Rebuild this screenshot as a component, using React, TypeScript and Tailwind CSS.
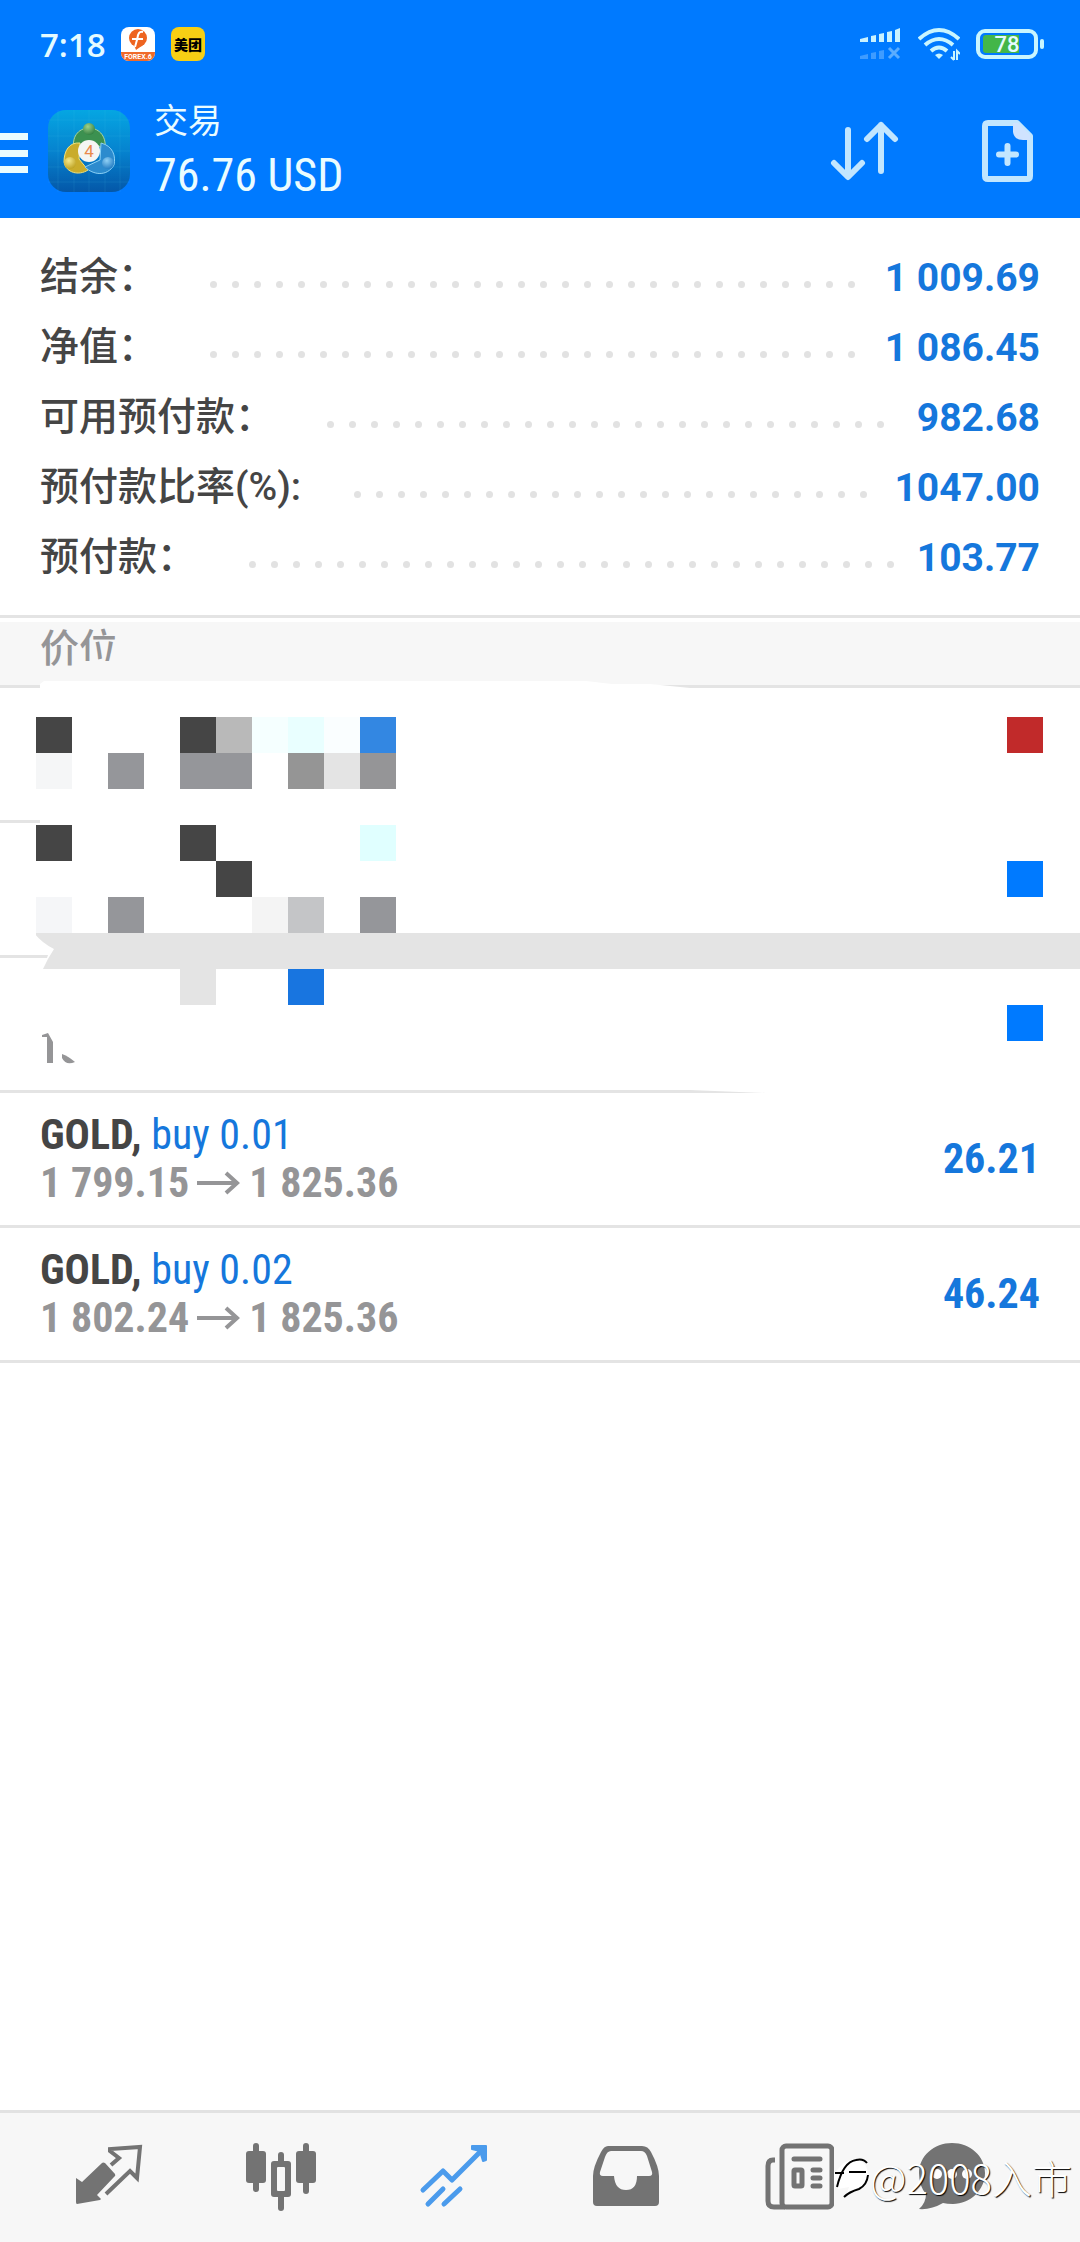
import React from "react";

const accountRows = [
  { label: "结余：", value: "1 009.69" },
  { label: "净值：", value: "1 086.45" },
  { label: "可用预付款：", value: "982.68" },
  { label: "预付款比率(%):", value: "1047.00" },
  { label: "预付款：", value: "103.77" },
];

const positions = [
  { symbol: "GOLD", side: "buy 0.01", open: "1 799.15", current: "1 825.36", profit: "26.21" },
  { symbol: "GOLD", side: "buy 0.02", open: "1 802.24", current: "1 825.36", profit: "46.24" },
];

const condensed = "font-['Roboto_Condensed','Liberation_Sans_Narrow',sans-serif]";

// x, y, width, colour; measured from the top of the first hidden row
const tiles: [number, number, number, string][] = [
  [36, 29, 36, "#454545"],
  [180, 29, 36, "#454545"],
  [216, 29, 36, "#b9b9b9"],
  [252, 29, 36, "#f5ffff"],
  [288, 29, 36, "#e9ffff"],
  [324, 29, 36, "#fafeff"],
  [360, 29, 36, "#3387e2"],
  [36, 65, 36, "#f5f6f7"],
  [108, 65, 36, "#95969a"],
  [180, 65, 72, "#95969a"],
  [288, 65, 36, "#959595"],
  [324, 65, 36, "#e4e4e4"],
  [360, 65, 36, "#959597"],
  [36, 137, 36, "#454545"],
  [180, 137, 36, "#454545"],
  [360, 137, 36, "#e0ffff"],
  [216, 173, 36, "#454545"],
  [36, 209, 36, "#f5f6f8"],
  [108, 209, 36, "#95969a"],
  [252, 209, 36, "#f4f4f4"],
  [288, 209, 36, "#c4c5c7"],
  [360, 209, 36, "#95969a"],
  [180, 281, 36, "#e4e4e4"],
  [288, 281, 36, "#1875e0"],
];

function MetaTraderLogo() {
  return (
    <svg viewBox="0 0 82 82" className="size-[82px]" aria-hidden="true">
      <defs>
        <linearGradient id="tile" x1="0" y1="0" x2="0" y2="1">
          <stop offset="0" stopColor="#05a6e2" />
          <stop offset="0.5" stopColor="#0683cf" />
          <stop offset="1" stopColor="#0457a8" />
        </linearGradient>
        <radialGradient id="green" cx="0.4" cy="0.3" r="0.8">
          <stop offset="0" stopColor="#9fd08a" />
          <stop offset="1" stopColor="#25783a" />
        </radialGradient>
        <radialGradient id="yellow" cx="0.4" cy="0.3" r="0.8">
          <stop offset="0" stopColor="#f5e88a" />
          <stop offset="1" stopColor="#b89a17" />
        </radialGradient>
        <radialGradient id="blue" cx="0.4" cy="0.3" r="0.8">
          <stop offset="0" stopColor="#8fd0f5" />
          <stop offset="1" stopColor="#1873bd" />
        </radialGradient>
      </defs>
      <rect width="82" height="82" rx="18" fill="url(#tile)" />
      <path
        d="M10 0V82M26 0V82M41 0V82M57 0V82M72 0V82M0 10H82M0 26H82M0 41H82M0 57H82M0 72H82"
        stroke="#5cc6ee"
        strokeOpacity="0.12"
      />
      <path d="M26 40C23 24 33 18 41 18S59 24 57 40L48 34H34Z" fill="#3c9150" stroke="#a9d49b" />
      <path d="M32 33C21 32 16 41 16 52C18 63 31 66 40 60L31 49Z" fill="#c9ac2b" stroke="#f2e27a" />
      <path d="M53 33C65 36 68 46 66 55C59 67 45 65 37 57L52 50Z" fill="#2c8bce" stroke="#8bd0f5" />
      <circle cx="41" cy="19" r="6" fill="url(#green)" />
      <circle cx="22" cy="53" r="6" fill="url(#yellow)" />
      <circle cx="60" cy="53" r="6" fill="url(#blue)" />
      <circle cx="41" cy="41" r="11" fill="#f4f6f3" />
      <text x="41" y="47" textAnchor="middle" fontSize="17" fontFamily="Roboto" fill="#e98a4c">
        4
      </text>
    </svg>
  );
}

function StatusBar() {
  return (
    <div className="flex h-[88px] items-center justify-between pl-10 pr-9 text-[#e4fbff]">
      <div className="flex items-center gap-4">
        <span className="w-[65px] whitespace-nowrap font-['Open_Sans',sans-serif] text-[33px] font-semibold leading-none">
          7:18
        </span>
        <svg viewBox="0 0 34 34" className="size-[34px]" aria-hidden="true">
          <rect width="34" height="34" rx="8" fill="#fff" />
          <path d="M0 25H34V26A8 8 0 0 1 26 34H8A8 8 0 0 1 0 26Z" fill="#f06a2a" />
          <circle cx="17" cy="11" r="9" fill="#ee6420" />
          <path d="M13 18L15 23L22 18Z" fill="#ee6420" />
          <path d="M22 5C18 4 17 7 16.500 11L14 20M11 12H22" fill="none" stroke="#fff" strokeWidth="2" />
          <text x="17" y="32" textAnchor="middle" fontSize="7" fontWeight="700" fontFamily="Roboto" fill="#fff">
            FOREX.6
          </text>
        </svg>
        <span className="flex size-[34px] items-center justify-center whitespace-nowrap rounded-lg bg-[#f7cf14] font-['Noto_Sans_CJK_SC',sans-serif] text-[14px] font-black leading-none text-black">
          美团
        </span>
      </div>
      <div className="flex items-center">
        <svg viewBox="0 0 42 32" className="mr-4 h-8 w-[42px]" aria-hidden="true">
          <path d="M0 11L8 9V14H0ZM11 8L16 7V14H11ZM19 6L24 5V14H19ZM27 4L32 3V14H27ZM35 2L40 0V14H35Z" fill="#c9f2ff" />
          <path d="M0 28L8 26V31H0ZM11 25L16 24V31H11ZM19 23L24 22V31H19Z" fill="#3f9cff" />
          <path d="M29 20L39 30M39 20L29 30" stroke="#5badff" strokeWidth="3" />
        </svg>
        <svg viewBox="0 0 42 34" className="mr-4 h-[34px] w-[42px]" fill="none" stroke="#c9f5ff" aria-hidden="true">
          <path d="M1 12Q21 -6 41 12" strokeWidth="4" />
          <path d="M7 18Q21 6 35 18" strokeWidth="4" />
          <path d="M13 24Q21 17 29 24" strokeWidth="4" />
          <path d="M17 28Q21 25 25 28L21 32Z" fill="#c9f5ff" stroke="none" />
          <path d="M36 24V33M33 30L36 33M39 33V24L42 27" strokeWidth="2" />
        </svg>
        <svg viewBox="0 0 68 30" className="h-[30px] w-[68px]" aria-hidden="true">
          <rect x="2" y="2" width="58" height="26" rx="7" fill="none" stroke="#c9f5ff" strokeWidth="4" />
          <path d="M10 6H43V24H10A3 3 0 0 1 7 21V9A3 3 0 0 1 10 6Z" fill="#43b649" />
          <rect x="64" y="10" width="4" height="10" rx="2" fill="#c9f5ff" />
          <text x="31" y="23" textAnchor="middle" fontSize="22" fontWeight="500" fontFamily="Roboto" fill="#e4fbff">
            78
          </text>
        </svg>
      </div>
    </div>
  );
}

function Header() {
  return (
    <header className="flex h-[130px] items-center pb-1">
      <button aria-label="菜单" className="mt-1 flex h-10 w-7 flex-col justify-between">
        <span className="h-[7px] w-full bg-[#eafcff]" />
        <span className="h-[7px] w-full bg-[#eafcff]" />
        <span className="h-[7px] w-full bg-[#eafcff]" />
      </button>
      <div className="ml-5">
        <MetaTraderLogo />
      </div>
      <div className="ml-6 flex grow flex-col text-[#eafcff]">
        <h1 className="font-['Noto_Sans_CJK_SC',sans-serif] text-[34px] leading-[48px]">交易</h1>
        <p className={`${condensed} text-[46px] leading-[64px]`}>76.76 USD</p>
      </div>
      <button aria-label="排序" className="mr-[82px]">
        <svg viewBox="0 0 70 60" className="h-[60px] w-[70px]" fill="none" stroke="#c2e6ff" strokeWidth="6" strokeLinecap="round" strokeLinejoin="round">
          <path d="M18 9V55M4 42L18 56L32 42" />
          <path d="M51 50V4M37 18L51 4L65 18" />
        </svg>
      </button>
      <button aria-label="新订单" className="mr-[46px]">
        <svg viewBox="0 0 52 62" className="h-[62px] w-[52px]">
          <path d="M6 3H35L48 16V56Q48 59 45 59H6Q3 59 3 56V6Q3 3 6 3Z" fill="none" stroke="#c2e6ff" strokeWidth="6" strokeLinejoin="round" />
          <path d="M31 3V12Q32 20 41 20H48V15L36 3Z" fill="#cfe3ff" />
          <path d="M25.500 26V43M17 34.500H34" stroke="#c2e6ff" strokeWidth="6" strokeLinecap="round" />
        </svg>
      </button>
    </header>
  );
}

function Dots() {
  return (
    <div className="ml-[45px] mr-2.5 mt-4 flex h-2 grow basis-0 flex-wrap overflow-hidden" aria-hidden="true">
      {Array.from({ length: 60 }, (_, i) => (
        <span key={i} className="flex h-2 w-[22px] justify-center">
          <span className="size-[7px] rounded-full bg-[#e2e2e2]" />
        </span>
      ))}
    </div>
  );
}

function HiddenPositions() {
  return (
    <div className="relative">
      <div className="h-[135px] border-b-[3px] border-[#e4e4e4]" />
      <div className="h-[135px] border-b-[3px] border-[#e4e4e4]" />
      <div className="h-[135px] border-b-[3px] border-[#e4e4e4]" />
      <div className="absolute bottom-[3px] left-10 right-0 top-0 bg-white" />
      <div className="absolute bottom-0 left-[765px] right-0 h-[3px] bg-white" />
      <svg viewBox="0 0 660 7" className="absolute -top-[7px] left-10 h-[7px] w-[660px]" aria-hidden="true">
        <path d="M0 7V3L4 0H546L572 3H610L650 7Z" fill="#fff" />
      </svg>
      <svg viewBox="0 0 80 3" className="absolute bottom-0 left-[690px] h-[3px] w-20" aria-hidden="true">
        <path d="M0 0H80V3H76Z" fill="#fff" />
      </svg>
      <div className="absolute left-9 right-0 top-[245px] h-9 bg-[#e4e4e4]" />
      <svg viewBox="0 0 400 405" className="absolute left-0 top-0 h-[405px] w-[400px]" aria-hidden="true">
        {tiles.map(([x, y, w, fill]) => (
          <rect key={`${x}-${y}`} x={x} y={y} width={w} height="36" fill={fill} />
        ))}
        <path d="M34 245Q42 255 54 261Q48 270 43 281H34Z" fill="#fff" />
        <path d="M0 267H48L47 270H0Z" fill="#e4e4e4" />
        <path d="M42 347L48 345L53 354V375H47V349H42Z" fill="#959597" />
        <path d="M62 366Q68 368 75 374Q66 378 62 370Z" fill="#959597" />
      </svg>
      <span className="absolute right-[37px] top-[29px] size-9 bg-[#c12a2a]" />
      <span className="absolute right-[37px] top-[173px] size-9 bg-[#007aff]" />
      <span className="absolute right-[37px] top-[317px] size-9 bg-[#007aff]" />
    </div>
  );
}

function BottomNav() {
  const item = "flex w-1/6 items-center justify-center";
  const grey = "#737373";
  return (
    <nav className="relative flex h-[132px] border-t-[3px] border-[#e2e2e2] bg-[#f7f7f7] px-[22px]">
      <button aria-label="行情" className={item}>
        <svg viewBox="0 0 70 70" className="size-[70px]">
          <path d="M3 35L9 39L29 20Q30 19 32 20L42 31Q43 33 41 34L24 52L28 56L27 57L4 61Q3 61 3 59Z" fill={grey} />
          <path d="M38 22L46 15L37 8V6L67 4L64 35L57 28L33 51" fill="none" stroke={grey} strokeWidth="4" />
        </svg>
      </button>
      <button aria-label="图表" className={item}>
        <svg viewBox="0 0 70 70" className="size-[70px]" fill={grey}>
          <rect x="7" y="0" width="6" height="49" rx="3" />
          <rect x="0" y="8" width="20" height="32" rx="3" />
          <rect x="57" y="0" width="6" height="51" rx="3" />
          <rect x="50" y="8" width="20" height="32" rx="3" />
          <rect x="32" y="9" width="6" height="59" rx="3" />
          <rect x="25" y="18" width="20" height="36" rx="3" />
          <rect x="31" y="24" width="8" height="24" rx="1" fill="#f7f7f7" />
        </svg>
      </button>
      <button aria-label="交易" className={item}>
        <svg viewBox="0 0 70 70" className="size-[70px]" fill="none" stroke="#4b9bec" strokeWidth="5" strokeLinecap="round" strokeLinejoin="round">
          <path d="M4 47L24 28L33 37L64 6" />
          <path d="M53 3H67V17L64 18L61 8L53 6Z" fill="#4b9bec" strokeWidth="2" />
          <path d="M9 61L24 46M25 61L41 46" />
        </svg>
      </button>
      <button aria-label="历史" className={item}>
        <svg viewBox="0 0 70 70" className="size-[70px]">
          <path d="M17 3H51Q57 3 60 9Q68 24 68 33V59Q68 63 64 63H6Q2 63 2 59V33Q2 24 10 9Q13 3 17 3Z" fill={grey} />
          <path d="M20 8H50Q54 8 56 13L61 29Q62 33 58 33H46Q46 47 35 47T23 33H12Q8 33 9 29L14 14Q16 8 20 8Z" fill="#f7f7f7" />
        </svg>
      </button>
      <button aria-label="新闻" className={item}>
        <svg viewBox="0 0 70 70" className="size-[70px]" fill="none" stroke={grey} strokeWidth="5">
          <rect x="18" y="3" width="50" height="61" rx="4" />
          <path d="M11 17H9Q4 17 4 23V58Q4 64 10 64H21" />
          <path d="M30 16H56M49 27H56M49 35H56M49 43H56" strokeLinecap="round" />
          <rect x="30" y="27" width="8" height="16" rx="1" />
        </svg>
      </button>
      <button aria-label="聊天" className={`${item} pr-10`}>
        <svg viewBox="0 0 70 70" className="size-[70px]">
          <path d="M35 0C53 0 68 13 68 30S53 61 36 61Q30 61 26 60Q14 67 2 66Q9 60 9 51Q2 43 2 30C2 13 17 0 35 0Z" fill={grey} />
          <circle cx="20" cy="31" r="5" fill="#fff" />
          <circle cx="35" cy="31" r="5" fill="#fff" />
          <circle cx="50" cy="31" r="5" fill="#fff" />
        </svg>
      </button>
      <div className="pointer-events-none absolute right-2 top-10 flex items-center text-white">
        <svg viewBox="0 0 36 48" className="h-12 w-9" aria-hidden="true">
          <path d="M0 20L4 16Q9 8 21 6Q33 8 34 21Q32 36 12 43L15 34L4 36L0 30Z" fill="#fff" />
          <path d="M1 20H10M15 19H32M3 34Q9 9 22 7Q29 5 33 10M34 22Q33 32 25 36Q15 39 10 44" fill="none" stroke="#000" strokeWidth="2" />
        </svg>
        <span className="whitespace-nowrap font-['Noto_Sans_CJK_SC',sans-serif] text-[40px] font-light leading-[48px] [text-shadow:1px_1px_1px_#000]">
          @2008入市
        </span>
      </div>
    </nav>
  );
}

export default function App() {
  return (
    <div className="flex min-h-screen flex-col bg-white">
      <div className="bg-[#007aff]">
        <StatusBar />
        <Header />
      </div>
      <main className="flex grow flex-col">
        <dl className="border-b-[3px] border-[#e4e4e4] px-10 pb-[23px] pt-6">
          {accountRows.map((row) => (
            <div key={row.label} className="flex h-[70px] items-center">
              <dt className="whitespace-nowrap font-['Roboto','Noto_Sans_CJK_SC',sans-serif] text-[39px] font-medium leading-none text-[#454545]">
                {row.label}
              </dt>
              <Dots />
              <dd className="whitespace-nowrap pt-0.5 font-['Roboto',sans-serif] text-[39px] font-bold leading-none text-[#1577dc]">
                {row.value}
              </dd>
            </div>
          ))}
        </dl>
        <div className="relative mt-1 h-[66px] border-b-[3px] border-[#e4e4e4] bg-[#f7f7f7] pl-10">
          <h2 className="font-['Noto_Sans_CJK_SC',sans-serif] text-[39px] font-medium leading-[46px] text-[#959597]">价位</h2>
          <div className="absolute left-20 top-[39px] h-3 w-12 bg-[#f7f7f7]" />
        </div>
        <HiddenPositions />
        <ul>
          {positions.map((p) => (
            <li key={p.side} className={`${condensed} flex h-[135px] items-center justify-between border-b-[3px] border-[#e4e4e4] px-10`}>
              <div className="text-[42px] leading-[48px]">
                <p className="text-[#1577dc]">
                  <b className="text-[#454545]">{p.symbol},</b> {p.side}
                </p>
                <p className="flex items-center font-bold text-[#959597]">
                  {p.open}
                  <svg viewBox="0 0 44 24" className="mx-2 h-6 w-11" fill="none" stroke="#959597" strokeWidth="4" role="img" aria-label="到">
                    <path d="M0 12H40M29 2L40 12L29 22" />
                  </svg>
                  {p.current}
                </p>
              </div>
              <span className="text-[42px] font-bold leading-none text-[#1577dc]">{p.profit}</span>
            </li>
          ))}
        </ul>
      </main>
      <BottomNav />
    </div>
  );
}
